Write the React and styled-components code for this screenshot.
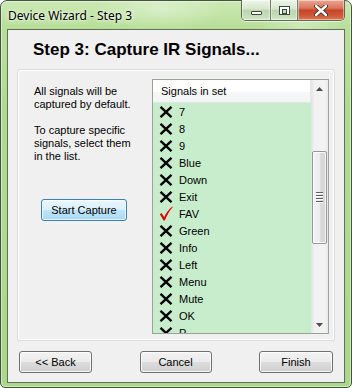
import React from 'react';
import styled, { createGlobalStyle } from 'styled-components';

const Global = createGlobalStyle`
  html, body { margin: 0; padding: 0; background: #ffffff; }
  body { width: 352px; height: 388px; overflow: hidden; font-family: "Liberation Sans", Arial, sans-serif; }
  * { box-sizing: border-box; }
`;

const Window = styled.div`
  width: 352px;
  height: 388px;
  border: 1px solid #44533f;
  border-radius: 7px 7px 5px 5px;
  background:
    radial-gradient(ellipse 90px 30px at 160px 8px, rgba(255,255,255,0.35), rgba(255,255,255,0) 70%),
    radial-gradient(ellipse 60px 30px at 300px 25px, rgba(255,255,255,0.3), rgba(255,255,255,0) 70%),
    linear-gradient(180deg, #cbe9b3 0px, #b7df98 28px, #b0da90 120px, #acd78b 100%);
  display: flex;
  flex-direction: column;
  padding: 0 6px 4px 6px;
  box-shadow: inset 0 0 0 1px rgba(255,255,255,0.45);
`;

const TitleBar = styled.div`
  height: 28px;
  display: flex;
  align-items: flex-start;
`;

const Caption = styled.div`
  font-family: "Noto Sans", "Open Sans", sans-serif;
  font-size: 12px;
  color: #000;
  padding: 7px 0 0 1px;
  line-height: 16px;
  text-shadow: 0 0 6px rgba(255,255,255,0.9), 0 0 3px rgba(255,255,255,0.9);
`;

const CaptionButtons = styled.div`
  margin-left: auto;
  margin-top: -1px;
  display: flex;
  height: 21px;
  border: 1px solid #5b6a55;
  border-top: none;
  border-radius: 0 0 5px 5px;
  overflow: hidden;
  box-shadow: 0 1px 0 rgba(255,255,255,0.6);
`;

const CapBtn = styled.div`
  width: ${p => p.$w}px;
  height: 100%;
  display: flex;
  align-items: center;
  justify-content: center;
  border-left: ${p => (p.$first ? 'none' : '1px solid #6f7f69')};
  background: ${p =>
    p.$close
      ? 'linear-gradient(180deg, #e9a793 0%, #d9775d 40%, #c6442a 52%, #cf5a3c 80%, #e07a55 100%)'
      : 'linear-gradient(180deg, #eef5e9 0%, #d6e7cd 45%, #bcd5ae 52%, #c8dfbb 85%, #d6ecca 100%)'};
  box-shadow: inset 0 0 0 1px rgba(255,255,255,0.45);
`;

const MinGlyph = styled.div`
  width: 11px;
  height: 4px;
  margin-top: 6px;
  background: #fff;
  border: 1px solid #3c4a38;
  border-radius: 1px;
`;

const MaxGlyph = styled.div`
  width: 11px;
  height: 9px;
  border: 1px solid #3c4a38;
  background: #fff;
  box-shadow: inset 0 0 0 1px #fff;
  position: relative;
  &::after {
    content: '';
    display: block;
    margin: 2px 2px 0 2px;
    height: 3px;
    border: 1px solid #3c4a38;
    background: #c8dcbd;
  }
`;

const Client = styled.div`
  flex: 1;
  border: 1px solid #5f6f5a;
  background: #f0f0f0;
  display: flex;
  flex-direction: column;
`;

const Heading = styled.div`
  font-family: "Liberation Sans", Arial, sans-serif;
  font-weight: bold;
  font-size: 17px;
  line-height: 20px;
  height: 20px;
  margin: 10px 0 9px 25px;
  color: #000;
  white-space: nowrap;
`;

const Panel = styled.div`
  margin: 0 9px;
  height: 272px;
  border: 1px solid #d9dde0;
  border-radius: 3px;
  box-shadow: inset 0 0 0 1px #ffffff;
  display: flex;
  padding: 9px 5px 6px 16px;
`;

const InfoColumn = styled.div`
  flex: 1;
  display: flex;
  flex-direction: column;
  padding-top: 6px;
`;

const Para = styled.p`
  margin: 0 0 13px 0;
  font-size: 11px;
  line-height: 13px;
  color: #000;
`;

const Button = styled.button`
  font-family: "Liberation Sans", Arial, sans-serif;
  font-size: 11px;
  color: #000;
  width: ${p => p.$w}px;
  height: 22px;
  padding: 0;
  border: 1px solid ${p => (p.$focus ? '#3c7fb1' : '#707070')};
  border-radius: 3px;
  background: ${p =>
    p.$focus
      ? 'linear-gradient(180deg, #eaf6fd 0%, #d9f0fc 48%, #bee6fd 52%, #a7d9f5 100%)'
      : 'linear-gradient(180deg, #f2f2f2 0%, #ebebeb 48%, #dddddd 52%, #cfcfcf 100%)'};
  box-shadow: inset 0 0 0 1px ${p => (p.$focus ? 'rgba(255,255,255,0.7)' : 'rgba(255,255,255,0.8)')};
  align-self: flex-start;
  margin-left: ${p => p.$ml || 0}px;
  margin-top: ${p => p.$mt || 0}px;
`;

const List = styled.div`
  width: 177px;
  height: 255px;
  border: 1px solid #9aa39a;
  display: flex;
  background: #c7edcc;
  overflow: hidden;
`;

const ListMain = styled.div`
  flex: 1;
  display: flex;
  flex-direction: column;
  overflow: hidden;
`;

const Header = styled.div`
  height: 23px;
  flex-shrink: 0;
  background: linear-gradient(180deg, #ffffff 0%, #ffffff 55%, #f6f7f8 56%, #f3f4f6 100%);
  border-bottom: 1px solid #e2e4e6;
  border-right: 1px solid #e8e8e8;
  font-size: 11px;
  line-height: 22px;
  padding-left: 8px;
  color: #000;
`;

const Row = styled.div`
  height: 17px;
  flex-shrink: 0;
  display: flex;
  align-items: center;
  padding-left: 6px;
  gap: 6px;
  font-size: 11px;
  color: #000;
`;

const IconBox = styled.span`
  width: 14px;
  height: 15px;
  display: flex;
  align-items: center;
  justify-content: center;
`;

const ScrollBar = styled.div`
  width: 17px;
  flex-shrink: 0;
  display: flex;
  flex-direction: column;
  background: linear-gradient(90deg, #e3e3e3 0%, #f1f1f1 20%, #f3f3f3 80%, #e8e8e8 100%);
`;

const Arrow = styled.div`
  height: 17px;
  display: flex;
  align-items: center;
  justify-content: center;
`;

const Track = styled.div`
  flex: 1;
  display: flex;
  flex-direction: column;
  padding: 54px 1px 0 1px;
`;

const Thumb = styled.div`
  height: 93px;
  border: 1px solid #979797;
  border-radius: 2px;
  background: linear-gradient(90deg, #f4f4f4 0%, #ececec 50%, #dcdcdc 51%, #d4d4d4 100%);
  box-shadow: inset 0 0 0 1px rgba(255,255,255,0.8);
  display: flex;
  flex-direction: column;
  align-items: center;
  justify-content: center;
  gap: 1px;
`;

const Grip = styled.div`
  width: 7px;
  height: 1px;
  background: #5f5f5f;
  box-shadow: 0 1px 0 #ffffff;
  margin-bottom: 1px;
`;

const ButtonBar = styled.div`
  display: flex;
  justify-content: space-between;
  margin: 10px 11px 0 11px;
`;

const XIcon = () => (
  <svg width="14" height="12" viewBox="0 0 14 12">
    <path d="M1.5 0.8 L12.5 11.2 M12.5 0.8 L1.5 11.2" stroke="#000" strokeWidth="2.3" fill="none" />
  </svg>
);

const CheckIcon = () => (
  <svg width="14" height="15" viewBox="0 0 14 15">
    <path d="M0.8 8.2 L2.6 7.0 L5.2 11.2 C7.2 6.8 9.8 3.2 13.4 0.6 L13.6 1.4 C10.4 4.6 8.0 9.0 5.8 14.6 L4.6 14.6 Z" fill="#e00000" />
  </svg>
);

const UpArrow = () => (
  <svg width="7" height="4" viewBox="0 0 7 4"><path d="M0 4 L3.5 0 L7 4 Z" fill="#4d4d4d" /></svg>
);
const DownArrow = () => (
  <svg width="7" height="4" viewBox="0 0 7 4"><path d="M0 0 L3.5 4 L7 0 Z" fill="#4d4d4d" /></svg>
);

const CloseGlyph = () => (
  <svg width="14" height="11" viewBox="0 0 14 11">
    <path d="M2 1 L12 10 M12 1 L2 10" stroke="#3a2a25" strokeWidth="4.2" strokeLinecap="round" />
    <path d="M2 1 L12 10 M12 1 L2 10" stroke="#ffffff" strokeWidth="2.4" strokeLinecap="round" />
  </svg>
);

const signals = [
  { name: '7' }, { name: '8' }, { name: '9' }, { name: 'Blue' }, { name: 'Down' },
  { name: 'Exit' }, { name: 'FAV', ok: true }, { name: 'Green' }, { name: 'Info' },
  { name: 'Left' }, { name: 'Menu' }, { name: 'Mute' }, { name: 'OK' }, { name: 'P' },
];

export default function App() {
  return (
    <>
      <Global />
      <Window>
        <TitleBar>
          <Caption>Device Wizard - Step 3</Caption>
          <CaptionButtons>
            <CapBtn $w={28} $first><MinGlyph /></CapBtn>
            <CapBtn $w={27}><MaxGlyph /></CapBtn>
            <CapBtn $w={47} $close><CloseGlyph /></CapBtn>
          </CaptionButtons>
        </TitleBar>
        <Client>
          <Heading>Step 3: Capture IR Signals...</Heading>
          <Panel>
            <InfoColumn>
              <Para>All signals will be<br />captured by default.</Para>
              <Para>To capture specific<br />signals, select them<br />in the list.</Para>
              <Button $w={86} $focus $ml={7} $mt={23}>Start Capture</Button>
            </InfoColumn>
            <List>
              <ListMain>
                <Header>Signals in set</Header>
                {signals.map(s => (
                  <Row key={s.name}>
                    <IconBox>{s.ok ? <CheckIcon /> : <XIcon />}</IconBox>
                    <span>{s.name}</span>
                  </Row>
                ))}
              </ListMain>
              <ScrollBar>
                <Arrow><UpArrow /></Arrow>
                <Track>
                  <Thumb>
                    <Grip /><Grip /><Grip /><Grip />
                  </Thumb>
                </Track>
                <Arrow><DownArrow /></Arrow>
              </ScrollBar>
            </List>
          </Panel>
          <ButtonBar>
            <Button $w={73}>&lt;&lt; Back</Button>
            <Button $w={72}>Cancel</Button>
            <Button $w={74}>Finish</Button>
          </ButtonBar>
        </Client>
      </Window>
    </>
  );
}
